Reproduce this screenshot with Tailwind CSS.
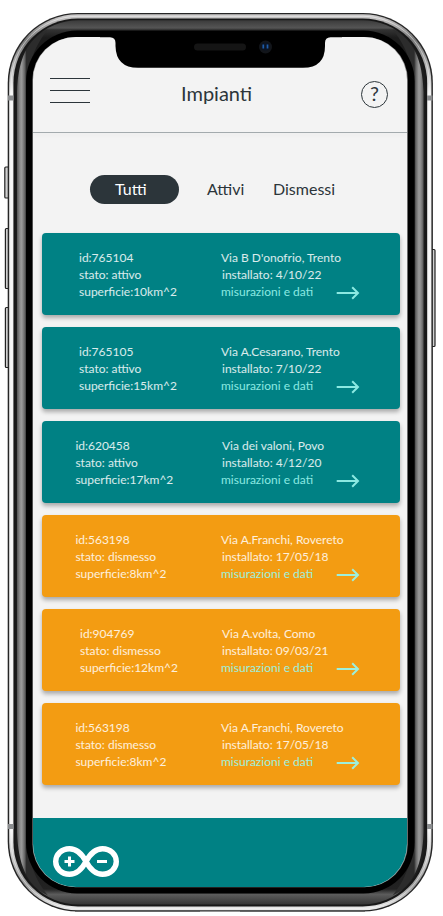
<!DOCTYPE html>
<html lang="it">
<head>
<meta charset="utf-8">
<title>Impianti</title>
<script src="https://cdn.jsdelivr.net/npm/@tailwindcss/browser@4"></script>
</head>
<body class="relative h-[916px] w-[443px] overflow-hidden bg-white font-['Lato',sans-serif] text-[#2c353a]">
<!-- Phone body -->
<svg class="absolute inset-0" width="443" height="916" viewBox="0 0 443 916">
  <defs>
    <linearGradient id="edge" gradientUnits="userSpaceOnUse" x1="0" y1="13" x2="0" y2="911"><stop offset="0" stop-color="#d4d2d2"/><stop offset=".03" stop-color="#777"/><stop offset=".09" stop-color="#f5f5f5"/><stop offset=".91" stop-color="#f5f5f5"/><stop offset=".97" stop-color="#999"/><stop offset="1" stop-color="#eee"/></linearGradient>
    <linearGradient id="band" gradientUnits="userSpaceOnUse" x1="0" y1="20" x2="0" y2="905"><stop offset="0" stop-color="#3a3a3a"/><stop offset=".009" stop-color="#555"/><stop offset=".011" stop-color="#333"/><stop offset=".02" stop-color="#1c1c1c"/><stop offset=".06" stop-color="#1c1c1c"/><stop offset=".94" stop-color="#1c1c1c"/><stop offset=".982" stop-color="#222"/><stop offset=".988" stop-color="#5c5c5c"/><stop offset="1" stop-color="#333"/></linearGradient>
    <linearGradient id="side" gradientUnits="userSpaceOnUse" x1="17" y1="0" x2="26.500" y2="0"><stop offset="0" stop-color="#555"/><stop offset=".3" stop-color="#8c8c8c"/><stop offset=".5" stop-color="#999"/><stop offset=".8" stop-color="#666"/><stop offset="1" stop-color="#2c2c2c"/></linearGradient>
  </defs>
  <g fill="#d0d0d0" stroke="#222" stroke-width="1.2">
    <rect x="4.8" y="167" width="5" height="31" rx="1"/>
    <rect x="5.4" y="228.500" width="4" height="60" rx="1"/>
    <rect x="5.400" y="307.500" width="4" height="60" rx="1"/>
    <rect x="431" y="249.500" width="4" height="97" rx="1"/>
  </g>
  <rect x="7.700" y="13" width="425.200" height="898.600" rx="70" fill="#262626"/>
  <rect x="9.200" y="14.300" width="422.200" height="896" rx="68.500" fill="url(#edge)"/>
  <rect x="11.300" y="16.300" width="418" height="892" rx="66.500" fill="none" stroke="#fff" stroke-opacity=".45"/>
  <rect x="13.400" y="18.500" width="413.800" height="888" rx="64.500" fill="#181818"/>
  <rect x="15.700" y="20.300" width="409.200" height="884.200" rx="62.500" fill="url(#band)"/>
  <g id="shine" fill="url(#side)">
    <path id="strip" d="M48 29.500C27 39 18 60 17 92V832C18 864 27 886 48 895.500C36 881 27.500 862 26.500 832V92C27.500 62 36 44 48 29.500Z"/>
    <use href="#strip" transform="matrix(-1 0 0 1 440.600 0)"/>
  </g>
  <rect x="26" y="30.500" width="388.600" height="863" rx="51" fill="#000"/>
  <rect x="32.400" y="37" width="375.400" height="850.300" rx="43" fill="#888"/>
  <path d="M8 98h5.500M427 98h5.500M8 826.500h5.500M427 826.500h5.500" stroke="#8b8d8f" stroke-width="5"/>
  <path d="M75 911.200h125M240 911.200h125" stroke="#555"/>
</svg>

<!-- Screen -->
<main class="relative mt-[37px] ml-[33px] flex h-[850px] w-[374px] flex-col overflow-hidden rounded-[43px] bg-[#f3f3f3]">
  <header class="flex h-[96px] shrink-0 items-start border-b border-[#a3aaad] pt-[41px] pr-[19px] pl-[17px] shadow-[0_4px_4px_rgba(0,0,0,0.015)]">
    <div class="flex w-[131px]"><div class="flex h-[25px] w-10 flex-col justify-between"><i class="h-px bg-[#2c353a]"></i><i class="h-px bg-[#2c353a]"></i><i class="h-px bg-[#2c353a]"></i></div></div>
    <h1 class="mt-[3px] text-[20px] leading-6">Impianti</h1>
    <div class="flex flex-1 justify-end"><span class="mt-[3px] flex size-[27px] items-center justify-center rounded-full border border-[#2c353a] pb-[3px] text-[20px] leading-none">?</span></div>
  </header>
  <nav class="mt-[42px] flex h-[29px] shrink-0 items-center pl-[57px] text-[16px]">
    <span class="flex h-[29px] w-[89px] items-center rounded-full bg-[#2c353a] pb-px pl-[25px] text-white">Tutti</span>
    <span class="ml-[28px] w-[66px] pb-[2px]">Attivi</span>
    <span class="pb-[2px]">Dismessi</span>
  </nav>
  <section class="mt-[29px] flex flex-col gap-3 px-[9px] text-[12px] leading-[17px] text-white/85 [&>article]:flex [&>article]:h-[82px] [&>article]:w-[358px] [&>article]:rounded-[4px] [&>article]:pt-[16px] [&>article]:shadow-[0_3px_4px_rgba(0,0,0,0.3)]">
    <article class="bg-[#008184]"><div class="w-[179px] pl-[37px]">id:765104<br>stato: attivo<br>superficie:10km^2</div><div><p>Via B D'onofrio, Trento</p><p class="pl-px">installato: 4/10/22</p><p class="flex text-[#8be9e2]"><span class="w-[115px]">misurazioni e dati</span><svg class="mt-[3px]" width="25" height="14" viewBox="0 0 25 14" fill="none" stroke="currentColor" stroke-width="2"><path d="M.700 7h21M16.200 1.200 22 7l-5.800 5.800"/></svg></p></div></article>
    <article class="bg-[#008184]"><div class="w-[179px] pl-[37px]">id:765105<br>stato: attivo<br>superficie:15km^2</div><div><p>Via A.Cesarano, Trento</p><p class="pl-px">installato: 7/10/22</p><p class="flex text-[#8be9e2]"><span class="w-[115px]">misurazioni e dati</span><svg class="mt-[3px]" width="25" height="14" viewBox="0 0 25 14" fill="none" stroke="currentColor" stroke-width="2"><path d="M.700 7h21M16.200 1.200 22 7l-5.800 5.800"/></svg></p></div></article>
    <article class="bg-[#008184]"><div class="w-[179px] pl-[33.400px]">id:620458<br>stato: attivo<br>superficie:17km^2</div><div><p class="pl-px">Via dei valoni, Povo</p><p class="pl-px">installato: 4/12/20</p><p class="flex text-[#8be9e2]"><span class="w-[115px]">misurazioni e dati</span><svg class="mt-[3px]" width="25" height="14" viewBox="0 0 25 14" fill="none" stroke="currentColor" stroke-width="2"><path d="M.700 7h21M16.200 1.200 22 7l-5.800 5.800"/></svg></p></div></article>
    <article class="bg-[#f39c12]"><div class="w-[179px] pl-[33.400px]">id:563198<br>stato: dismesso<br>superficie:8km^2</div><div><p>Via A.Franchi, Rovereto</p><p class="pl-px">installato: 17/05/18</p><p class="flex text-[#9df0dc]"><span class="w-[115px]">misurazioni e dati</span><svg class="mt-[3px]" width="25" height="14" viewBox="0 0 25 14" fill="none" stroke="currentColor" stroke-width="2"><path d="M.700 7h21M16.200 1.200 22 7l-5.800 5.800"/></svg></p></div></article>
    <article class="bg-[#f39c12]"><div class="w-[179px] pl-[38px]">id:904769<br>stato: dismesso<br>superficie:12km^2</div><div><p class="pl-px">Via A.volta, Como</p><p class="pl-px">installato: 09/03/21</p><p class="flex text-[#9df0dc]"><span class="w-[115px]">misurazioni e dati</span><svg class="mt-[3px]" width="25" height="14" viewBox="0 0 25 14" fill="none" stroke="currentColor" stroke-width="2"><path d="M.700 7h21M16.200 1.200 22 7l-5.800 5.800"/></svg></p></div></article>
    <article class="bg-[#f39c12]"><div class="w-[179px] pl-[33.400px]">id:563198<br>stato: dismesso<br>superficie:8km^2</div><div><p>Via A.Franchi, Rovereto</p><p class="pl-px">installato: 17/05/18</p><p class="flex text-[#9df0dc]"><span class="w-[115px]">misurazioni e dati</span><svg class="mt-[3px]" width="25" height="14" viewBox="0 0 25 14" fill="none" stroke="currentColor" stroke-width="2"><path d="M.700 7h21M16.200 1.200 22 7l-5.800 5.800"/></svg></p></div></article>
  </section>
  <footer class="mt-auto h-[69px] shrink-0 bg-[#008184] pt-[28px] pl-[20px]">
    <svg width="66" height="31" viewBox="0 0 66 31" fill="none" stroke="#fff"><path stroke-width="5.400" d="M33 15.500C29 8 24 2.700 16.500 2.700C8.500 2.700 2.700 8.500 2.700 15.500S8.500 28.300 16.500 28.300C24 28.300 29 23 33 15.500C37 8 42 2.700 49.500 2.700C57.500 2.700 63.300 8.500 63.300 15.500S57.500 28.300 49.500 28.300C42 28.300 37 23 33 15.500Z"/><path stroke-width="3" d="M11.500 15.500h10M16.500 10.500v10M44 15.500h10"/></svg>
  </footer>
</main>

<!-- Notch -->
<svg class="absolute top-[34px] left-[100px]" width="242" height="36" viewBox="100 34 242 36"><path d="M100 34V37.300H110Q115.500 37.500 115.500 43V46Q116 67.800 138 67.800H303Q325 67.800 325 46V43Q325 37.500 330.500 37.300H342V34Z"/></svg>
<svg class="absolute top-[38px] left-[190px]" width="90" height="20" viewBox="190 38 90 20"><rect x="194" y="43.500" width="52" height="7" rx="3.500" fill="#151515"/><circle cx="265.500" cy="47" r="6.500" fill="#12151a"/><circle cx="265.500" cy="46.500" r="4" fill="#0b1424"/><path d="M263.300 44.500v4M267.500 44.500v4" stroke="#1f5ca8" stroke-width="1.700"/></svg>
</body>
</html>
